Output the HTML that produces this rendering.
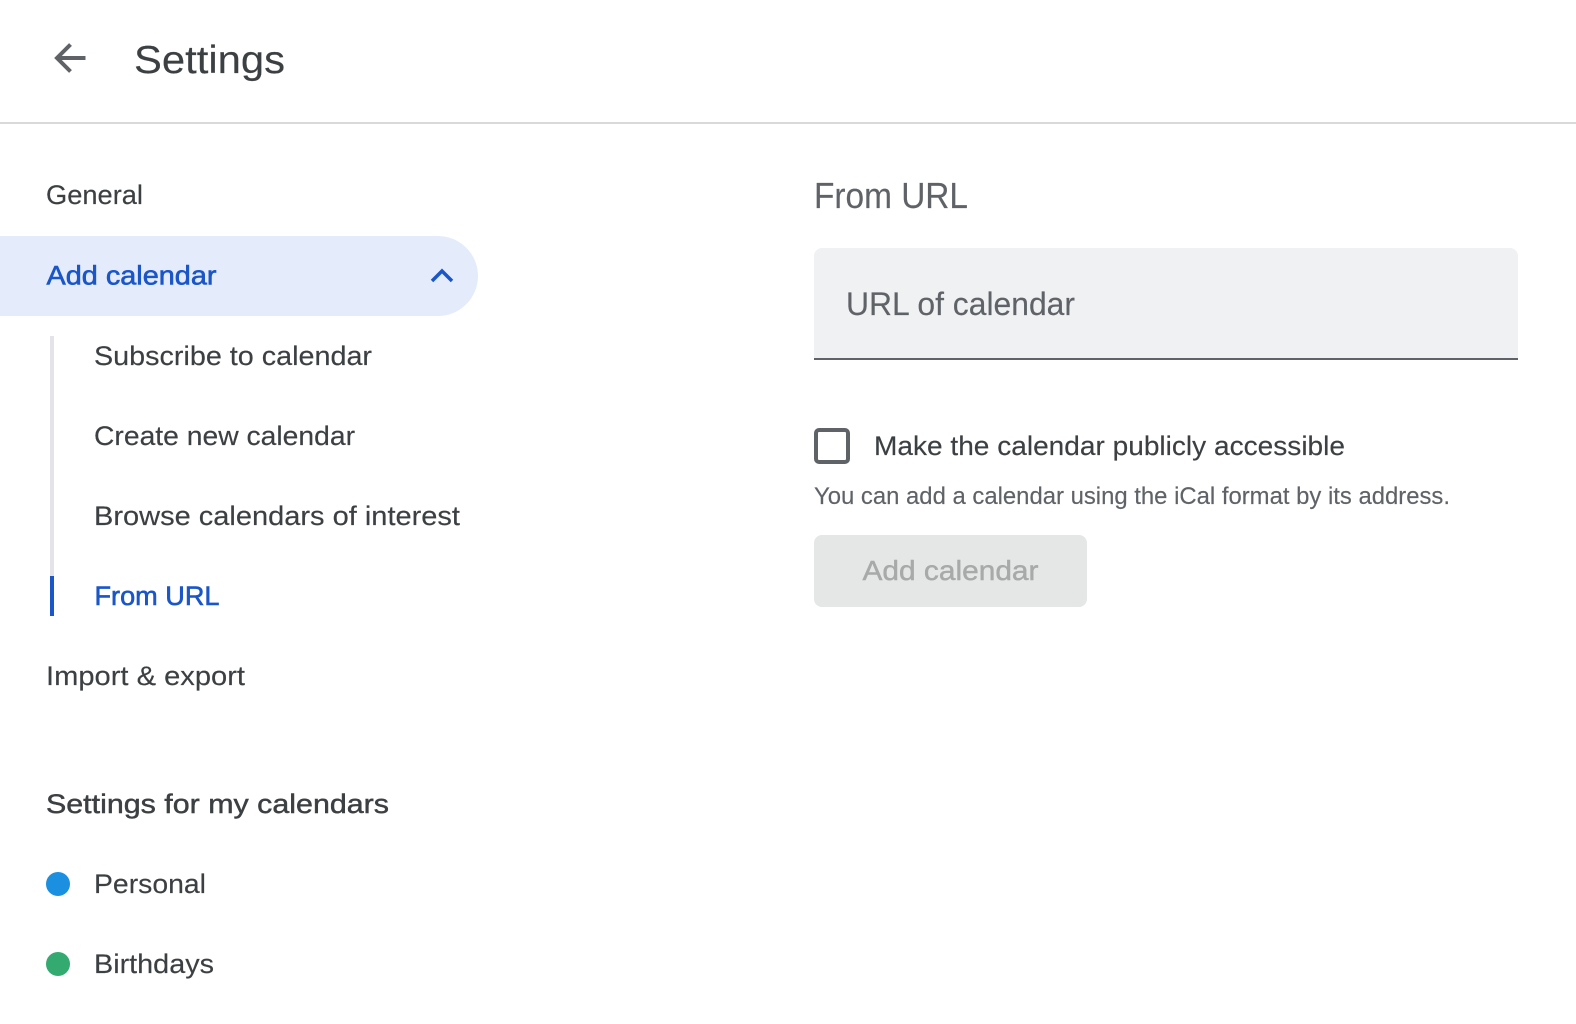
<!DOCTYPE html>
<html lang="en"><head><meta charset="utf-8"><title>Settings</title>
<style>
html,body{margin:0;padding:0;background:#fff;width:1576px;height:1024px;overflow:hidden}
svg{display:block}
text{font-family:"Liberation Sans",sans-serif;fill:#3c4043;font-size:27px;stroke:#3c4043;stroke-width:.15px}
.b{fill:#1a56c8;stroke:#1a56c8;stroke-width:.6px}
.m{stroke:#3c4043;stroke-width:.45px}
</style></head><body>
<svg width="1576" height="1024" viewBox="0 0 1576 1024" xmlns="http://www.w3.org/2000/svg">
<path d="M85.500 58H57.500M70.500 44.500L57 58L70.500 71.500" fill="none" stroke="#5f6368" stroke-width="4"/>
<text x="134" y="73" style="font-size:39px" textLength="151" lengthAdjust="spacingAndGlyphs">Settings</text>
<rect x="0" y="122" width="1576" height="2" fill="#d9d9dc"/>
<text x="46" y="204" textLength="97" lengthAdjust="spacingAndGlyphs">General</text>
<path d="M0 236H438A40 40 0 0 1 438 316H0Z" fill="#e4ebfb"/>
<text class="b" x="46.500" y="284.500" textLength="170" lengthAdjust="spacingAndGlyphs">Add calendar</text>
<path d="M432 281L442 271L452 281" fill="none" stroke="#1a56c8" stroke-width="3.500"/>
<rect x="50" y="336" width="4" height="240" fill="#e3e3e8"/>
<rect x="50" y="576" width="4" height="40" fill="#1a56c8"/>
<text x="94" y="365" textLength="278" lengthAdjust="spacingAndGlyphs">Subscribe to calendar</text>
<text x="94" y="445" textLength="261" lengthAdjust="spacingAndGlyphs">Create new calendar</text>
<text x="94" y="525" textLength="366" lengthAdjust="spacingAndGlyphs">Browse calendars of interest</text>
<text class="b" x="94.500" y="605" textLength="125" lengthAdjust="spacingAndGlyphs">From URL</text>
<text x="46" y="685" textLength="199" lengthAdjust="spacingAndGlyphs">Import &amp; export</text>
<text class="m" x="46" y="813" textLength="343" lengthAdjust="spacingAndGlyphs">Settings for my calendars</text>
<circle cx="58" cy="884" r="12" fill="#1b8fe0"/>
<text x="94" y="893" textLength="112" lengthAdjust="spacingAndGlyphs">Personal</text>
<circle cx="58" cy="964" r="12" fill="#33aa6f"/>
<text x="94" y="973" textLength="120" lengthAdjust="spacingAndGlyphs">Birthdays</text>
<text x="814" y="208" style="font-size:36px;fill:#5f6368;stroke:#5f6368" textLength="154" lengthAdjust="spacingAndGlyphs">From URL</text>
<path d="M814 256A8 8 0 0 1 822 248H1510A8 8 0 0 1 1518 256V360H814Z" fill="#f0f1f3"/>
<rect x="814" y="358" width="704" height="2" fill="#5f6368"/>
<text x="846" y="315" style="font-size:32px;fill:#5f6368;stroke:#5f6368" textLength="229" lengthAdjust="spacingAndGlyphs">URL of calendar</text>
<rect x="816" y="430" width="32" height="32" rx="3" fill="none" stroke="#5f6368" stroke-width="4"/>
<text x="874" y="455" textLength="471" lengthAdjust="spacingAndGlyphs">Make the calendar publicly accessible</text>
<text x="814" y="504" style="font-size:24px;fill:#5f6368;stroke:#5f6368" textLength="636" lengthAdjust="spacingAndGlyphs">You can add a calendar using the iCal format by its address.</text>
<rect x="814" y="535" width="273" height="72" rx="8" fill="#e5e7e7"/>
<text x="862.500" y="580" style="font-size:28px;fill:#a8a9a9;stroke:#a8a9a9;stroke-width:.45px" textLength="176" lengthAdjust="spacingAndGlyphs">Add calendar</text>
</svg>
</body></html>
